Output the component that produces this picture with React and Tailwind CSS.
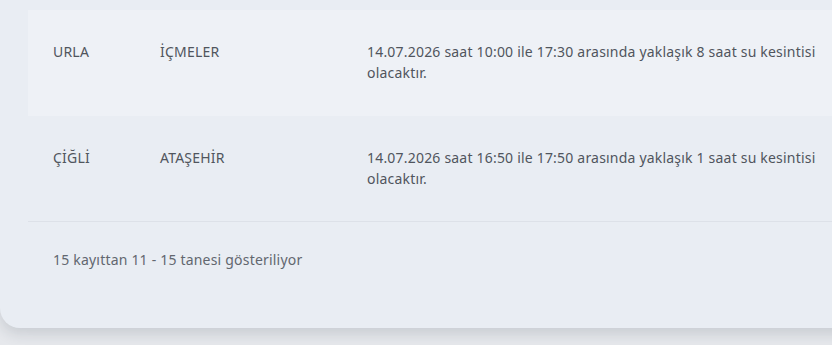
const rows = [
  { district: "URLA", area: "İÇMELER", text: "14.07.2026 saat 10:00 ile 17:30 arasında yaklaşık 8 saat su kesintisi olacaktır." },
  { district: "ÇİĞLİ", area: "ATAŞEHİR", text: "14.07.2026 saat 16:50 ile 17:50 arasında yaklaşık 1 saat su kesintisi olacaktır." },
];

export default function App() {
  return (
    <div className="h-[345px] overflow-hidden bg-[#e6e8ec] font-['Noto_Sans','Lato',sans-serif]">
      <div className="w-[880px] rounded-bl-[20px] bg-[#e9edf3] pl-7 pt-2.5 shadow-[0_6px_14px_rgba(30,40,60,0.14)]">
        <div className="text-[14px] leading-[21px] tracking-[0.2px] text-[#50555d]">
          {rows.map((row, i) => (
            <div
              key={row.district}
              className={`flex h-[106px] items-start pt-[31px] ${i === 0 ? "bg-[#eef1f6]" : "border-b border-[#dde1e8]"}`}
            >
              <div className="w-[132px] shrink-0 pl-[25px]">{row.district}</div>
              <div className="w-[207px] shrink-0">{row.area}</div>
              <p className="w-[470px] shrink-0">{row.text}</p>
            </div>
          ))}
        </div>
        <div className="pb-[58px] pl-[25px] pt-[27px] text-[14px] leading-[21px] tracking-[0.2px] text-[#62676f]">
          15 kayıttan 11 - 15 tanesi gösteriliyor
        </div>
      </div>
    </div>
  );
}
